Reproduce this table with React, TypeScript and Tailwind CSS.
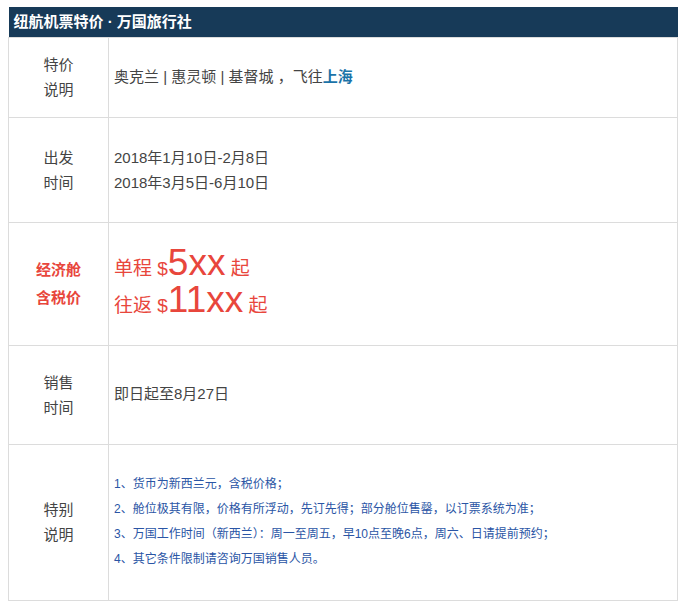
const font = { fontFamily: '"Liberation Sans", "Noto Sans CJK SC", sans-serif' };

const notes = [
  "1、货币为新西兰元，含税价格；",
  "2、舱位极其有限，价格有所浮动，先订先得；部分舱位售罄，以订票系统为准；",
  "3、万国工作时间（新西兰）：周一至周五，早10点至晚6点，周六、日请提前预约；",
  "4、其它条件限制请咨询万国销售人员。",
];

function Label({ lines, red }: { lines: string[]; red?: boolean }) {
  return (
    <td
      className={
        "w-[100px] border border-[#dcdcdc] text-center align-middle text-[15px] " +
        (red ? "font-bold leading-[28px] text-[#e8463c]" : "leading-[25px] text-[#444]")
      }
    >
      {lines.map((l) => (
        <div key={l}>{l}</div>
      ))}
    </td>
  );
}

export default function App() {
  return (
    <div className="bg-white min-h-[611px] pt-[7px] pl-[8px]" style={font}>
      <table className="w-[670px] border-collapse">
        <thead>
          <tr className="h-[30px] bg-[#173a58]">
            <th colSpan={2} className="pl-[5px] text-left text-[15px] font-bold text-white">
              纽航机票特价 · 万国旅行社
            </th>
          </tr>
        </thead>
        <tbody>
          <tr className="h-[80px]">
            <Label lines={["特价", "说明"]} />
            <td className="border border-[#dcdcdc] pl-[5px] text-[15px] text-[#444]">
              奥克兰 | 惠灵顿 | 基督城 ，飞往<b className="text-[#1b73a8]">上海</b>
            </td>
          </tr>
          <tr className="h-[105px]">
            <Label lines={["出发", "时间"]} />
            <td className="border border-[#dcdcdc] pl-[5px] text-[15px] leading-[25px] text-[#444]">
              <div>2018年1月10日-2月8日</div>
              <div>2018年3月5日-6月10日</div>
            </td>
          </tr>
          <tr className="h-[123px]">
            <Label lines={["经济舱", "含税价"]} red />
            <td className="border border-[#dcdcdc] pl-[5px] text-[19px] leading-[31px] text-[#e8463c]">
              <div>
                单程 $<span className="text-[37px]">5xx</span> 起
              </div>
              <div>
                往返 $<span className="text-[37px]">11xx</span> 起
              </div>
            </td>
          </tr>
          <tr className="h-[99px]">
            <Label lines={["销售", "时间"]} />
            <td className="border border-[#dcdcdc] pl-[5px] text-[15px] text-[#444]">即日起至8月27日</td>
          </tr>
          <tr className="h-[156px]">
            <Label lines={["特别", "说明"]} />
            <td className="border border-[#dcdcdc] pl-[5px] text-[12px] leading-[25px] text-[#2a55a5]">
              {notes.map((n) => (
                <div key={n}>{n}</div>
              ))}
            </td>
          </tr>
        </tbody>
      </table>
    </div>
  );
}
